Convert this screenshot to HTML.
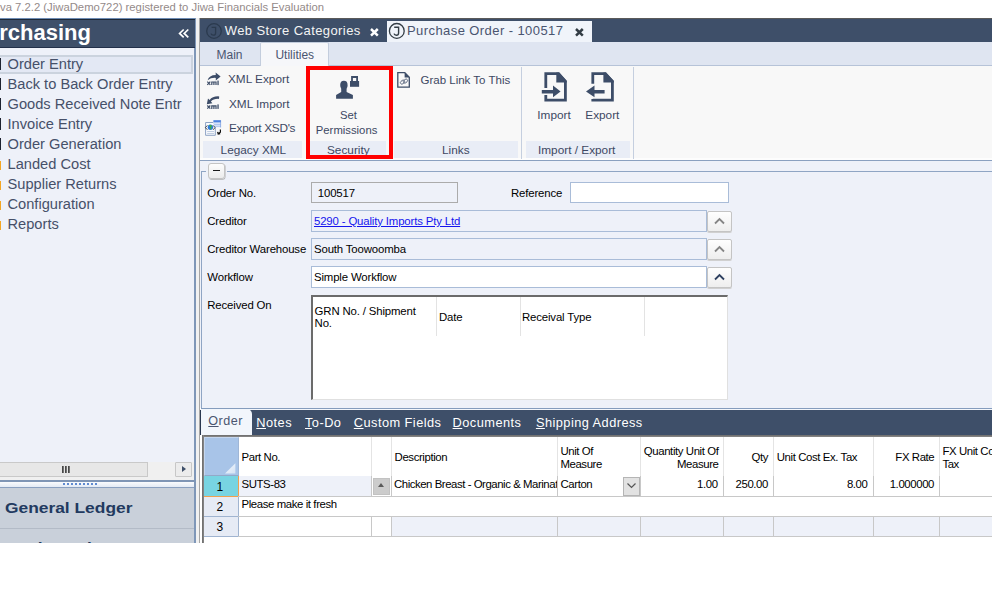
<!DOCTYPE html>
<html><head><meta charset="utf-8"><style>
html,body{margin:0;padding:0;}
body{width:992px;height:600px;overflow:hidden;background:#fff;position:relative;font-family:"Liberation Sans", sans-serif;}
.a{position:absolute;}
.t{white-space:nowrap;}
</style></head><body>
<div class="a t" style="left:0px;top:1.53px;font-size:11.3px;line-height:11.3px;color:#948a89;font-weight:normal;">va 7.2.2 (JiwaDemo722) registered to Jiwa Financials Evaluation</div>
<div class="a" style="left:0px;top:18px;width:195px;height:30px;background:#3e4f69"></div>
<div class="a" style="left:0px;top:18px;width:195px;height:1px;background:#6e8cb4"></div>
<div class="a" style="left:0px;top:19px;width:195px;height:1px;background:#1d2838"></div>
<div class="a" style="left:195px;top:18px;width:1px;height:30px;background:#7f97b8"></div>
<div class="a" style="left:0px;top:47px;width:195px;height:1px;background:#22304a"></div>
<div class="a t" style="left:-0.8px;top:21.68px;font-size:22px;line-height:22px;color:#fff;font-weight:bold;">rchasing</div>
<svg class="a" style="left:176px;top:26px" width="16" height="14" viewBox="176 26 16 14"><path d="M183.7 29.5 L179.6 33.4 L183.7 37.3 M188.3 29.5 L184.2 33.4 L188.3 37.3" fill="none" stroke="#fff" stroke-width="1.7"/></svg>
<div class="a" style="left:0px;top:48px;width:194px;height:414px;background:#eef1f9"></div>
<div class="a" style="left:194px;top:48px;width:2px;height:495px;background:#7f97b8"></div>
<div class="a" style="left:-2px;top:55px;width:195px;height:19px;background:#e3e8f4;border:2px solid #cbd3de;box-sizing:border-box"></div>
<div class="a t" style="left:7.5px;top:57.20px;font-size:14.65px;line-height:14.65px;color:#465069;font-weight:normal;">Order Entry</div>
<div class="a" style="left:0px;top:57.599999999999994px;width:1.3px;height:12.5px;background:#1d2230"></div>
<div class="a t" style="left:7.5px;top:77.20px;font-size:14.65px;line-height:14.65px;color:#465069;font-weight:normal;">Back to Back Order Entry</div>
<div class="a" style="left:0px;top:77.6px;width:1.3px;height:12.5px;background:#1d2230"></div>
<div class="a t" style="left:7.5px;top:97.20px;font-size:14.65px;line-height:14.65px;color:#465069;font-weight:normal;">Goods Received Note Entr</div>
<div class="a" style="left:0px;top:97.6px;width:1.3px;height:12.5px;background:#1d2230"></div>
<div class="a t" style="left:7.5px;top:117.20px;font-size:14.65px;line-height:14.65px;color:#465069;font-weight:normal;">Invoice Entry</div>
<div class="a" style="left:0px;top:117.6px;width:1.3px;height:12.5px;background:#1d2230"></div>
<div class="a t" style="left:7.5px;top:137.20px;font-size:14.65px;line-height:14.65px;color:#465069;font-weight:normal;">Order Generation</div>
<div class="a" style="left:0px;top:137.6px;width:1.3px;height:12.5px;background:#1d2230"></div>
<div class="a t" style="left:7.5px;top:157.20px;font-size:14.65px;line-height:14.65px;color:#465069;font-weight:normal;">Landed Cost</div>
<div class="a" style="left:0px;top:161.0px;width:1.1px;height:9px;background:#f5a623"></div>
<div class="a t" style="left:7.5px;top:177.20px;font-size:14.65px;line-height:14.65px;color:#465069;font-weight:normal;">Supplier Returns</div>
<div class="a" style="left:0px;top:181.0px;width:1.1px;height:9px;background:#f5a623"></div>
<div class="a t" style="left:7.5px;top:197.20px;font-size:14.65px;line-height:14.65px;color:#465069;font-weight:normal;">Configuration</div>
<div class="a" style="left:0px;top:201.0px;width:1.1px;height:9px;background:#f5a623"></div>
<div class="a t" style="left:7.5px;top:217.20px;font-size:14.65px;line-height:14.65px;color:#465069;font-weight:normal;">Reports</div>
<div class="a" style="left:0px;top:221.0px;width:1.1px;height:9px;background:#f5a623"></div>
<div class="a" style="left:0px;top:462px;width:194px;height:18px;background:#f0f0f0"></div>
<div class="a" style="left:-2px;top:462px;width:150px;height:15px;background:#e7e7e7;border:1px solid #c9c9c9;box-sizing:border-box"></div>
<div class="a" style="left:62px;top:466px;width:1.5px;height:7px;background:linear-gradient(90deg,#333,#888)"></div>
<div class="a" style="left:65px;top:466px;width:1.5px;height:7px;background:linear-gradient(90deg,#333,#888)"></div>
<div class="a" style="left:68px;top:466px;width:1.5px;height:7px;background:linear-gradient(90deg,#333,#888)"></div>
<div class="a" style="left:175px;top:462px;width:17px;height:15px;background:#ececec;border:1px solid #c7c7c7;box-sizing:border-box;border-radius:1px"></div>
<div class="a" style="left:182px;top:466px;width:0;height:0;border-top:3.5px solid transparent;border-bottom:3.5px solid transparent;border-left:4px solid #3e4f69"></div>
<div class="a" style="left:0px;top:479.5px;width:194px;height:2px;background:#7f95b5"></div>
<div class="a" style="left:0px;top:481.5px;width:194px;height:6px;background:linear-gradient(#fafbfd,#dfe7f3)"></div>
<div class="a" style="left:63px;top:483px;width:2px;height:2px;background:#5f8ad0"></div>
<div class="a" style="left:67px;top:483px;width:2px;height:2px;background:#5f8ad0"></div>
<div class="a" style="left:71px;top:483px;width:2px;height:2px;background:#5f8ad0"></div>
<div class="a" style="left:75px;top:483px;width:2px;height:2px;background:#5f8ad0"></div>
<div class="a" style="left:79px;top:483px;width:2px;height:2px;background:#5f8ad0"></div>
<div class="a" style="left:83px;top:483px;width:2px;height:2px;background:#5f8ad0"></div>
<div class="a" style="left:87px;top:483px;width:2px;height:2px;background:#5f8ad0"></div>
<div class="a" style="left:91px;top:483px;width:2px;height:2px;background:#5f8ad0"></div>
<div class="a" style="left:95px;top:483px;width:2px;height:2px;background:#5f8ad0"></div>
<div class="a" style="left:0px;top:487px;width:194px;height:1px;background:#8aa0c0"></div>
<div class="a" style="left:0px;top:488px;width:194px;height:55px;background:#c9d0da"></div>
<div class="a" style="left:0px;top:527.5px;width:194px;height:1px;background:#b3bbc7"></div>
<div class="a t" style="left:5.3px;top:500.64px;font-size:14.6px;line-height:14.6px;color:#223a60;font-weight:bold;transform:scaleX(1.19);transform-origin:0 0">General Ledger</div>
<div class="a" style="left:0;top:529px;width:194px;height:14px;overflow:hidden"><div class="a t" style="left:5.5px;top:12.44px;font-size:14.6px;line-height:14.6px;color:#223a60;font-weight:bold;transform:scaleX(1.19);transform-origin:0 0">Cash Book</div></div>
<div class="a" style="left:196px;top:18px;width:3px;height:525px;background:#f1f1f1"></div>
<div class="a" style="left:199px;top:18px;width:1px;height:525px;background:#a6a6a6"></div>
<div class="a" style="left:200px;top:18px;width:792px;height:24px;background:#3e4f69;border-top:1px solid #5a5a5a;box-sizing:border-box"></div>
<svg class="a" style="left:205px;top:22px" width="18" height="18" viewBox="0 0 18 18"><circle cx="9" cy="9" r="7.3" fill="none" stroke="#2b3a4e" stroke-width="1.3"/><path d="M6.6 5.3 H10.6 V11 Q10.6 13.2 8.4 13.2 Q6.5 13.2 6 11.6" fill="none" stroke="#2b3a4e" stroke-width="1.3"/></svg>
<div class="a t" style="left:224.7px;top:23.70px;font-size:13px;line-height:13px;color:#f4f4f4;font-weight:normal;letter-spacing:0.42px">Web Store Categories</div>
<svg class="a" style="left:369px;top:26px" width="11" height="11" viewBox="0 0 11 11"><path d="M2 3 L8.8 9.6 M8.8 3 L2 9.6" stroke="#fff" stroke-width="2.5"/></svg>
<div class="a" style="left:387px;top:21px;width:205px;height:21px;background:#f0f4fa"></div>
<svg class="a" style="left:388px;top:22px" width="18" height="18" viewBox="0 0 18 18"><circle cx="8.8" cy="8.9" r="7.4" fill="none" stroke="#333d45" stroke-width="1.3"/><path d="M6.2 5.3 H10.6 V11 Q10.6 13.2 8.4 13.2 Q6.5 13.2 6 11.6" fill="none" stroke="#333d45" stroke-width="1.4"/></svg>
<div class="a t" style="left:407px;top:23.70px;font-size:13px;line-height:13px;color:#4a5570;font-weight:normal;letter-spacing:0.42px">Purchase Order - 100517</div>
<svg class="a" style="left:574px;top:26px" width="11" height="11" viewBox="0 0 11 11"><path d="M2 3 L8.8 9.6 M8.8 3 L2 9.6" stroke="#333d45" stroke-width="2.5"/></svg>
<div class="a" style="left:200px;top:42px;width:792px;height:24px;background:#dfe5f1"></div>
<div class="a" style="left:200px;top:65px;width:792px;height:1px;background:#b6c3d8"></div>
<div class="a" style="left:260px;top:42px;width:68.5px;height:24px;background:#f6f7fa;border:1px solid #c3cddd;border-bottom:none;box-sizing:border-box;border-radius:2px 2px 0 0"></div>
<div class="a t" style="left:216.5px;top:49.14px;font-size:12px;line-height:12px;color:#4a5570;font-weight:normal;">Main</div>
<div class="a t" style="left:275.4px;top:49.14px;font-size:12px;line-height:12px;color:#4a5570;font-weight:normal;">Utilities</div>
<div class="a" style="left:200px;top:66px;width:792px;height:94px;background:#f8f8f8"></div>
<div class="a" style="left:200px;top:158px;width:792px;height:2px;background:#fdfdfd"></div>
<div class="a" style="left:200px;top:160px;width:792px;height:1px;background:#8aa0c0"></div>
<div class="a t" style="left:228px;top:74.31px;font-size:11.8px;line-height:11.8px;color:#3d4863;font-weight:normal;">XML Export</div>
<div class="a t" style="left:229px;top:99.01px;font-size:11.8px;line-height:11.8px;color:#3d4863;font-weight:normal;">XML Import</div>
<div class="a t" style="left:229px;top:122.61px;font-size:11.8px;line-height:11.8px;color:#3d4863;font-weight:normal;letter-spacing:-0.3px">Export XSD's</div>
<div class="a" style="left:203px;top:141px;width:99px;height:17px;background:#e9edf6"></div>
<div class="a t" style="left:220.6px;top:145.01px;font-size:11.8px;line-height:11.8px;color:#3d4863;font-weight:normal;">Legacy XML</div>
<div class="a" style="left:310px;top:141px;width:76px;height:17px;background:#e9edf6"></div>
<div class="a t" style="left:340px;top:110.03px;font-size:11.3px;line-height:11.3px;color:#3d4863;font-weight:normal;">Set</div>
<div class="a t" style="left:315.8px;top:125.43px;font-size:11.3px;line-height:11.3px;color:#3d4863;font-weight:normal;">Permissions</div>
<div class="a t" style="left:327px;top:144.51px;font-size:11.8px;line-height:11.8px;color:#3d4863;font-weight:normal;">Security</div>
<div class="a" style="left:394px;top:141px;width:124px;height:17px;background:#e9edf6"></div>
<div class="a t" style="left:420.5px;top:75.27px;font-size:11.5px;line-height:11.5px;color:#3d4863;font-weight:normal;">Grab Link To This</div>
<div class="a t" style="left:442px;top:144.81px;font-size:11.8px;line-height:11.8px;color:#3d4863;font-weight:normal;">Links</div>
<div class="a" style="left:521px;top:67px;width:1px;height:92px;background:#c5cfdf"></div>
<div class="a" style="left:526px;top:141px;width:104px;height:17px;background:#e9edf6"></div>
<div class="a t" style="left:537.3px;top:109.61px;font-size:11.8px;line-height:11.8px;color:#3d4863;font-weight:normal;">Import</div>
<div class="a t" style="left:585.3px;top:109.61px;font-size:11.8px;line-height:11.8px;color:#3d4863;font-weight:normal;">Export</div>
<div class="a t" style="left:538px;top:144.71px;font-size:11.8px;line-height:11.8px;color:#3d4863;font-weight:normal;">Import / Export</div>
<div class="a" style="left:633px;top:67px;width:1px;height:92px;background:#c5cfdf"></div>
<svg class="a" style="left:0;top:0" width="992" height="200" viewBox="0 0 992 200"><path d="M207.6 80.2 Q209 75 215.8 74.9 L215.6 72.6 L220.6 76.4 L215.8 80.4 L215.8 77.9 Q211 77.6 207.6 80.2 Z" fill="#3d4d68"/><path d="M207.3 81.7 L210.3 84.9 M210.3 81.7 L207.3 84.9" stroke="#3d4d68" stroke-width="1.2"/><path d="M211.2 81.5 H216.6 V85.1 H215.4 V82.6 H214.5 V85.1 H213.3 V82.6 H212.4 V85.1 H211.2 Z" fill="#3d4d68"/><rect x="217.4" y="80.6" width="1.3" height="4.5" fill="#3d4d68"/><path d="M219.2 96.4 Q212.5 96 209.6 100 L208 98.6 L206.8 104.2 L212.4 103.2 L210.9 101.6 Q213.4 98.6 219 98.9 Z" fill="#3d4d68"/><path d="M207.3 105.5 L210.3 108.7 M210.3 105.5 L207.3 108.7" stroke="#3d4d68" stroke-width="1.2"/><path d="M211.2 105.3 H216.6 V108.89999999999999 H215.4 V106.39999999999999 H214.5 V108.89999999999999 H213.3 V106.39999999999999 H212.4 V108.89999999999999 H211.2 Z" fill="#3d4d68"/><rect x="217.4" y="104.39999999999999" width="1.3" height="4.5" fill="#3d4d68"/><path d="M205.6 122.5 H213 L215.3 124.8 V135.3 H205.6 Z" fill="#fbfcfe" stroke="#8ea3c4" stroke-width="1"/><rect x="213.4" y="120.2" width="7.4" height="7.3" fill="#e6eefb"/><rect x="213.4" y="120.2" width="7.4" height="2.2" fill="#4a80e0"/><path d="M214 124.3 H220.4 M214 126.2 H220.4" stroke="#8fb0e8" stroke-width="0.8"/><path d="M220.6 120.2 V127.5" stroke="#5a86d8" stroke-width="0.6"/><circle cx="210.4" cy="127.2" r="2.7" fill="#2f7bd8"/><path d="M209 125 Q211 124.4 212.2 126 L211 127.4 L211.6 129 Q210.4 129.6 209.8 128.4 L210.2 127 Z" fill="#3eae4a"/><path d="M207.4 125.4 L205.4 127.6 L207.4 129.8 M213.2 125.4 L215 127.6 L213.2 129.8" fill="none" stroke="#222" stroke-width="0.8"/><path d="M207.2 131.6 H214 M207.2 133.6 H214" stroke="#a9bbd4" stroke-width="0.8"/><path d="M220.4 129.4 V132.2 L218.4 133.6 M217.6 131.8 L218.2 134 L220.2 133.6" fill="none" stroke="#111" stroke-width="1.2"/><ellipse cx="343.9" cy="85" rx="3.7" ry="4.3" fill="#3d4d68"/><path d="M341.2 88 H346.6 V92 L352.9 95 V98.7 H336.1 V95 L341.2 92 Z" fill="#3d4d68"/><rect x="350" y="81" width="9.1" height="5.8" fill="#3d4d68"/><path d="M352 81.5 V77 H357.1 V81.5" fill="none" stroke="#3d4d68" stroke-width="1.8"/><path d="M397.8 72.6 H404.8 L409.3 77.2 V87.2 H397.8 Z" fill="none" stroke="#3d4d68" stroke-width="1.3"/><path d="M404.6 72.6 L409.2 77.4 H404.6 Z" fill="#3d4d68"/><g fill="none" stroke="#3d4d68" stroke-width="0.9" opacity="0.85"><rect x="400.2" y="80.6" width="4.6" height="3" rx="1.5" transform="rotate(-40 402.5 82.1)"/><rect x="403.2" y="79.6" width="4.6" height="3" rx="1.5" transform="rotate(-40 405.5 81.1)"/></g><path d="M545.8 87.9 V73.7 H558.6 L565.4 81.2 V100.2 H545.8 V95.1" fill="none" stroke="#3d4d68" stroke-width="2.8"/><path d="M556.3 72.5 H559 L566.7 81 V82.4 H556.3 Z" fill="#3d4d68"/><path d="M541.8 89.9 H553 V85.4 L560.6 91.6 L553 97.2 V93.4 H541.8 Z" fill="#3d4d68"/><path d="M592.8 83.7 V73.7 H605.3 L612.4 81.2 V100.2 H592.8 V99" fill="none" stroke="#3d4d68" stroke-width="2.8"/><path d="M603.4 72.5 H606 L613.8 81 V82.4 H603.4 Z" fill="#3d4d68"/><path d="M604.6 89.9 H594.5 V85.4 L586 91.6 L594.5 97.2 V93.4 H604.6 Z" fill="#3d4d68"/></svg>
<div class="a" style="left:306px;top:66px;width:87px;height:93px;border:4px solid #ff0000;box-sizing:border-box"></div>
<div class="a" style="left:200px;top:161px;width:792px;height:247px;background:#eef1f9"></div>
<div class="a" style="left:201px;top:171px;width:1px;height:238px;background:#8fa5c4"></div>
<div class="a" style="left:201px;top:171px;width:5px;height:1px;background:#8fa5c4"></div>
<div class="a" style="left:227px;top:171px;width:765px;height:1px;background:#8fa5c4"></div>
<div class="a" style="left:201px;top:408px;width:791px;height:1px;background:#849cbd"></div>
<div class="a" style="left:208px;top:163px;width:16.5px;height:15.5px;background:linear-gradient(#fdfdfd,#ececec);border:1px solid #c4c4c4;border-radius:3px;box-sizing:border-box;box-shadow:0.5px 0.8px 0 #b0b0b0"></div>
<div class="a" style="left:212.5px;top:170px;width:7.5px;height:1.3px;background:#1a1a1a"></div>
<div class="a t" style="left:207.3px;top:187.85px;font-size:11.4px;line-height:11.4px;color:#000;font-weight:normal;letter-spacing:-0.15px">Order No.</div>
<div class="a t" style="left:207.3px;top:215.65px;font-size:11.4px;line-height:11.4px;color:#000;font-weight:normal;letter-spacing:-0.15px">Creditor</div>
<div class="a t" style="left:207.3px;top:243.65px;font-size:11.4px;line-height:11.4px;color:#000;font-weight:normal;letter-spacing:-0.15px">Creditor Warehouse</div>
<div class="a t" style="left:207.3px;top:271.65px;font-size:11.4px;line-height:11.4px;color:#000;font-weight:normal;letter-spacing:-0.15px">Workflow</div>
<div class="a t" style="left:207.3px;top:300.05px;font-size:11.4px;line-height:11.4px;color:#000;font-weight:normal;letter-spacing:-0.15px">Received On</div>
<div class="a" style="left:311px;top:182px;width:147px;height:21px;border:1px solid #ababab;box-sizing:border-box"></div>
<div class="a t" style="left:317.8px;top:187.85px;font-size:11.4px;line-height:11.4px;color:#000;font-weight:normal;letter-spacing:-0.15px">100517</div>
<div class="a t" style="left:511px;top:187.85px;font-size:11.4px;line-height:11.4px;color:#000;font-weight:normal;letter-spacing:-0.15px">Reference</div>
<div class="a" style="left:570px;top:182px;width:159px;height:21px;background:#fff;border:1px solid #a9bcd8;box-sizing:border-box"></div>
<div class="a" style="left:311px;top:210px;width:396px;height:22px;border:1px solid #a9bcd8;box-sizing:border-box"></div>
<div class="a t" style="left:314px;top:216.05px;font-size:11.4px;line-height:11.4px;color:#1515ee;font-weight:normal;letter-spacing:-0.15px;text-decoration:underline">5290 - Quality Imports Pty Ltd</div>
<div class="a" style="left:311px;top:238px;width:396px;height:22px;border:1px solid #a9bcd8;box-sizing:border-box"></div>
<div class="a t" style="left:314px;top:244.05px;font-size:11.4px;line-height:11.4px;color:#000;font-weight:normal;letter-spacing:-0.15px">South Toowoomba</div>
<div class="a" style="left:311px;top:266px;width:396px;height:22px;background:#fff;border:1px solid #a9bcd8;box-sizing:border-box"></div>
<div class="a t" style="left:314px;top:272.05px;font-size:11.4px;line-height:11.4px;color:#000;font-weight:normal;letter-spacing:-0.15px">Simple Workflow</div>
<div class="a" style="left:707px;top:210.5px;width:24.5px;height:21px;background:linear-gradient(#fefefe,#eeeeee);border:1px solid #c4c4c4;border-radius:2px;box-sizing:border-box;box-shadow:0 1px 0 #d0d0d0"></div>
<svg class="a" style="left:712.8px;top:216.5px" width="13" height="9" viewBox="0 0 13 9"><path d="M2 6.5 L6.5 2 L11 6.5" fill="none" stroke="#858585" stroke-width="1.8"/></svg>
<div class="a" style="left:707px;top:238.5px;width:24.5px;height:21px;background:linear-gradient(#fefefe,#eeeeee);border:1px solid #c4c4c4;border-radius:2px;box-sizing:border-box;box-shadow:0 1px 0 #d0d0d0"></div>
<svg class="a" style="left:712.8px;top:244.5px" width="13" height="9" viewBox="0 0 13 9"><path d="M2 6.5 L6.5 2 L11 6.5" fill="none" stroke="#858585" stroke-width="1.8"/></svg>
<div class="a" style="left:707px;top:266.5px;width:24.5px;height:21px;background:linear-gradient(#fefefe,#eeeeee);border:1px solid #c4c4c4;border-radius:2px;box-sizing:border-box;box-shadow:0 1px 0 #d0d0d0"></div>
<svg class="a" style="left:712.8px;top:272.5px" width="13" height="9" viewBox="0 0 13 9"><path d="M2 6.5 L6.5 2 L11 6.5" fill="none" stroke="#2d3f5f" stroke-width="1.8"/></svg>
<div class="a" style="left:311px;top:295px;width:417px;height:105px;background:#fff;border-top:2px solid #6b6b6b;border-left:2px solid #6b6b6b;border-right:1px solid #e0e0e0;border-bottom:1px solid #e0e0e0;box-sizing:border-box"></div>
<div class="a t" style="left:314.6px;top:305.85px;font-size:11.4px;line-height:11.4px;color:#000;font-weight:normal;letter-spacing:-0.15px">GRN No. / Shipment</div>
<div class="a t" style="left:314.6px;top:318.35px;font-size:11.4px;line-height:11.4px;color:#000;font-weight:normal;letter-spacing:-0.15px">No.</div>
<div class="a" style="left:436px;top:297px;width:1px;height:39px;background:#e3e3e3"></div>
<div class="a t" style="left:439px;top:311.85px;font-size:11.4px;line-height:11.4px;color:#000;font-weight:normal;letter-spacing:-0.15px">Date</div>
<div class="a" style="left:519.5px;top:297px;width:1px;height:39px;background:#e3e3e3"></div>
<div class="a t" style="left:522px;top:311.85px;font-size:11.4px;line-height:11.4px;color:#000;font-weight:normal;letter-spacing:-0.15px">Receival Type</div>
<div class="a" style="left:643.5px;top:297px;width:1px;height:39px;background:#e3e3e3"></div>
<div class="a" style="left:200px;top:409px;width:792px;height:1px;background:#f4f7fc"></div>
<div class="a" style="left:200px;top:410px;width:792px;height:25px;background:#3e4f69"></div>
<div class="a" style="left:201px;top:409px;width:50.5px;height:26px;background:#f2f6fc;border-radius:0 5px 0 0"></div>
<div class="a" style="left:200px;top:410px;width:1px;height:25px;background:#2a3850"></div>
<div class="a t" style="left:208.3px;top:414.93px;font-size:12.6px;line-height:12.6px;color:#4a5570;font-weight:normal;letter-spacing:0.5px"><u>O</u>rder</div>
<div class="a t" style="left:256.3px;top:417.26px;font-size:12.8px;line-height:12.8px;color:#fff;font-weight:normal;letter-spacing:0.45px"><u>N</u>otes</div>
<div class="a t" style="left:305px;top:417.26px;font-size:12.8px;line-height:12.8px;color:#fff;font-weight:normal;letter-spacing:0.45px"><u>T</u>o-Do</div>
<div class="a t" style="left:353.8px;top:417.26px;font-size:12.8px;line-height:12.8px;color:#fff;font-weight:normal;letter-spacing:0.45px"><u>C</u>ustom Fields</div>
<div class="a t" style="left:452.6px;top:417.26px;font-size:12.8px;line-height:12.8px;color:#fff;font-weight:normal;letter-spacing:0.45px"><u>D</u>ocuments</div>
<div class="a t" style="left:535.9px;top:417.26px;font-size:12.8px;line-height:12.8px;color:#fff;font-weight:normal;letter-spacing:0.45px"><u>S</u>hipping Address</div>
<div class="a" style="left:200px;top:435px;width:792px;height:108px;background:#fff"></div>
<div class="a" style="left:202px;top:435px;width:790px;height:2px;background:linear-gradient(#6a6a6a,#8a8a8a)"></div>
<div class="a" style="left:202px;top:435px;width:2px;height:108px;background:linear-gradient(90deg,#6a6a6a,#8a8a8a)"></div>
<div class="a" style="left:204px;top:437px;width:34.5px;height:39px;background:#a8c4e8;border-right:1px solid #9fb6d6;border-left:1px solid #c4d6ee;border-top:1px solid #c4d6ee;border-bottom:1px solid #93a9c8;box-sizing:border-box"></div>
<svg class="a" style="left:224px;top:462px" width="13" height="13"><defs><linearGradient id="tg" x1="0" y1="0" x2="1" y2="1"><stop offset="0" stop-color="#f4f8fd"/><stop offset="1" stop-color="#d4e2f4"/></linearGradient></defs><path d="M11.4 1.2 L11.4 11.5 L1 11.5 Z" fill="url(#tg)"/></svg>
<div class="a" style="left:371px;top:437px;width:1px;height:39px;background:#e4e4e4"></div>
<div class="a" style="left:391px;top:437px;width:1px;height:39px;background:#e4e4e4"></div>
<div class="a" style="left:557px;top:437px;width:1px;height:39px;background:#e4e4e4"></div>
<div class="a" style="left:640px;top:437px;width:1px;height:39px;background:#e4e4e4"></div>
<div class="a" style="left:723px;top:437px;width:1px;height:39px;background:#e4e4e4"></div>
<div class="a" style="left:773px;top:437px;width:1px;height:39px;background:#e4e4e4"></div>
<div class="a" style="left:873px;top:437px;width:1px;height:39px;background:#e4e4e4"></div>
<div class="a" style="left:939px;top:437px;width:1px;height:39px;background:#e4e4e4"></div>
<div class="a" style="left:204px;top:476px;width:34.5px;height:20.5px;background:#78d4e2;border-right:1.5px solid #f0a050;border-bottom:1.5px solid #f0a050;box-sizing:border-box"></div>
<div class="a" style="left:239px;top:476px;width:132.5px;height:20.5px;background:#eef1f9"></div>
<div class="a" style="left:238px;top:496px;width:754px;height:1px;background:#c8c8c8"></div>
<div class="a" style="left:371px;top:476px;width:1px;height:20.5px;background:#c8c8c8"></div>
<div class="a" style="left:391px;top:476px;width:1px;height:20.5px;background:#c8c8c8"></div>
<div class="a" style="left:557px;top:476px;width:1px;height:20.5px;background:#c8c8c8"></div>
<div class="a" style="left:640px;top:476px;width:1px;height:20.5px;background:#c8c8c8"></div>
<div class="a" style="left:723px;top:476px;width:1px;height:20.5px;background:#c8c8c8"></div>
<div class="a" style="left:773px;top:476px;width:1px;height:20.5px;background:#c8c8c8"></div>
<div class="a" style="left:873px;top:476px;width:1px;height:20.5px;background:#c8c8c8"></div>
<div class="a" style="left:939px;top:476px;width:1px;height:20.5px;background:#c8c8c8"></div>
<div class="a" style="left:204px;top:497px;width:34.5px;height:20px;background:#e6ebf5;border-right:1px solid #a0b4d0;border-bottom:1px solid #a0b4d0;box-sizing:border-box"></div>
<div class="a" style="left:238px;top:516px;width:754px;height:1px;background:#c8c8c8"></div>
<div class="a" style="left:204px;top:517px;width:34.5px;height:20px;background:#e6ebf5;border-right:1px solid #a0b4d0;border-bottom:1px solid #a0b4d0;box-sizing:border-box"></div>
<div class="a" style="left:391.5px;top:517px;width:600.5px;height:20px;background:#eef1f9"></div>
<div class="a" style="left:371px;top:517px;width:1px;height:20px;background:#c8c8c8"></div>
<div class="a" style="left:391px;top:517px;width:1px;height:20px;background:#c8c8c8"></div>
<div class="a" style="left:557px;top:517px;width:1px;height:20px;background:#c8c8c8"></div>
<div class="a" style="left:640px;top:517px;width:1px;height:20px;background:#c8c8c8"></div>
<div class="a" style="left:723px;top:517px;width:1px;height:20px;background:#c8c8c8"></div>
<div class="a" style="left:773px;top:517px;width:1px;height:20px;background:#c8c8c8"></div>
<div class="a" style="left:873px;top:517px;width:1px;height:20px;background:#c8c8c8"></div>
<div class="a" style="left:939px;top:517px;width:1px;height:20px;background:#c8c8c8"></div>
<div class="a" style="left:238px;top:536px;width:754px;height:1px;background:#c8c8c8"></div>
<div class="a t" style="left:241.5px;top:452.05px;font-size:11.4px;line-height:11.4px;color:#000;font-weight:normal;letter-spacing:-0.4px">Part No.</div>
<div class="a t" style="left:394.6px;top:452.05px;font-size:11.4px;line-height:11.4px;color:#000;font-weight:normal;letter-spacing:-0.4px">Description</div>
<div class="a t" style="left:560.4px;top:445.85px;font-size:11.4px;line-height:11.4px;color:#000;font-weight:normal;letter-spacing:-0.4px">Unit Of</div>
<div class="a t" style="left:560.4px;top:459.05px;font-size:11.4px;line-height:11.4px;color:#000;font-weight:normal;letter-spacing:-0.4px">Measure</div>
<div class="a t" style="right:273.5px;top:445.85px;font-size:11.4px;line-height:11.4px;color:#000;font-weight:normal;text-align:right;letter-spacing:-0.4px">Quantity Unit Of</div>
<div class="a t" style="right:273.5px;top:459.05px;font-size:11.4px;line-height:11.4px;color:#000;font-weight:normal;text-align:right;letter-spacing:-0.4px">Measure</div>
<div class="a t" style="right:224px;top:452.05px;font-size:11.4px;line-height:11.4px;color:#000;font-weight:normal;text-align:right;letter-spacing:-0.4px">Qty</div>
<div class="a t" style="left:776.8px;top:452.05px;font-size:11.4px;line-height:11.4px;color:#000;font-weight:normal;letter-spacing:-0.4px">Unit Cost Ex. Tax</div>
<div class="a t" style="right:57.700000000000045px;top:452.05px;font-size:11.4px;line-height:11.4px;color:#000;font-weight:normal;text-align:right;letter-spacing:-0.4px">FX Rate</div>
<div class="a t" style="left:942.4px;top:445.95px;font-size:11.4px;line-height:11.4px;color:#000;font-weight:normal;letter-spacing:-0.4px">FX Unit Cost Ex.</div>
<div class="a t" style="left:942.4px;top:458.65px;font-size:11.4px;line-height:11.4px;color:#000;font-weight:normal;letter-spacing:-0.4px">Tax</div>
<div class="a t" style="left:216.5px;top:481.34px;font-size:12px;line-height:12px;color:#000;font-weight:normal;">1</div>
<div class="a t" style="left:241.5px;top:478.55px;font-size:11.4px;line-height:11.4px;color:#000;font-weight:normal;letter-spacing:-0.4px">SUTS-83</div>
<div class="a" style="left:373px;top:478px;width:17px;height:17px;background:#cccccc;border:1px solid #c2c2c2;box-sizing:border-box"></div>
<div class="a" style="left:377.8px;top:482.6px;width:0;height:0;border-left:3.6px solid transparent;border-right:3.6px solid transparent;border-bottom:4.2px solid #5a5a5a"></div>
<div class="a" style="left:392px;top:476px;width:165px;height:20px;overflow:hidden"><div class="a t" style="left:2px;top:2.55px;font-size:11.4px;line-height:11.4px;white-space:nowrap;letter-spacing:-0.45px">Chicken Breast - Organic &amp; Marinated</div></div>
<div class="a t" style="left:560.5px;top:478.95px;font-size:11.4px;line-height:11.4px;color:#000;font-weight:normal;letter-spacing:-0.4px">Carton</div>
<div class="a" style="left:623px;top:477px;width:17px;height:18.5px;background:#e2e2e2;border:1px solid #b5b5b5;box-sizing:border-box"></div>
<svg class="a" style="left:625.5px;top:482px" width="11" height="8"><path d="M1.5 1.5 L5.5 5.5 L9.5 1.5" fill="none" stroke="#555" stroke-width="1.2"/></svg>
<div class="a t" style="right:274.4px;top:478.95px;font-size:11.4px;line-height:11.4px;color:#000;font-weight:normal;text-align:right;letter-spacing:-0.4px">1.00</div>
<div class="a t" style="right:224px;top:478.95px;font-size:11.4px;line-height:11.4px;color:#000;font-weight:normal;text-align:right;letter-spacing:-0.4px">250.00</div>
<div class="a t" style="right:124.5px;top:478.95px;font-size:11.4px;line-height:11.4px;color:#000;font-weight:normal;text-align:right;letter-spacing:-0.4px">8.00</div>
<div class="a t" style="right:58px;top:478.95px;font-size:11.4px;line-height:11.4px;color:#000;font-weight:normal;text-align:right;letter-spacing:-0.4px">1.000000</div>
<div class="a t" style="left:216.5px;top:500.84px;font-size:12px;line-height:12px;color:#000;font-weight:normal;">2</div>
<div class="a t" style="left:241.5px;top:498.65px;font-size:11.4px;line-height:11.4px;color:#000;font-weight:normal;letter-spacing:-0.4px">Please make it fresh</div>
<div class="a t" style="left:216.5px;top:520.94px;font-size:12px;line-height:12px;color:#000;font-weight:normal;">3</div>
</body></html>
